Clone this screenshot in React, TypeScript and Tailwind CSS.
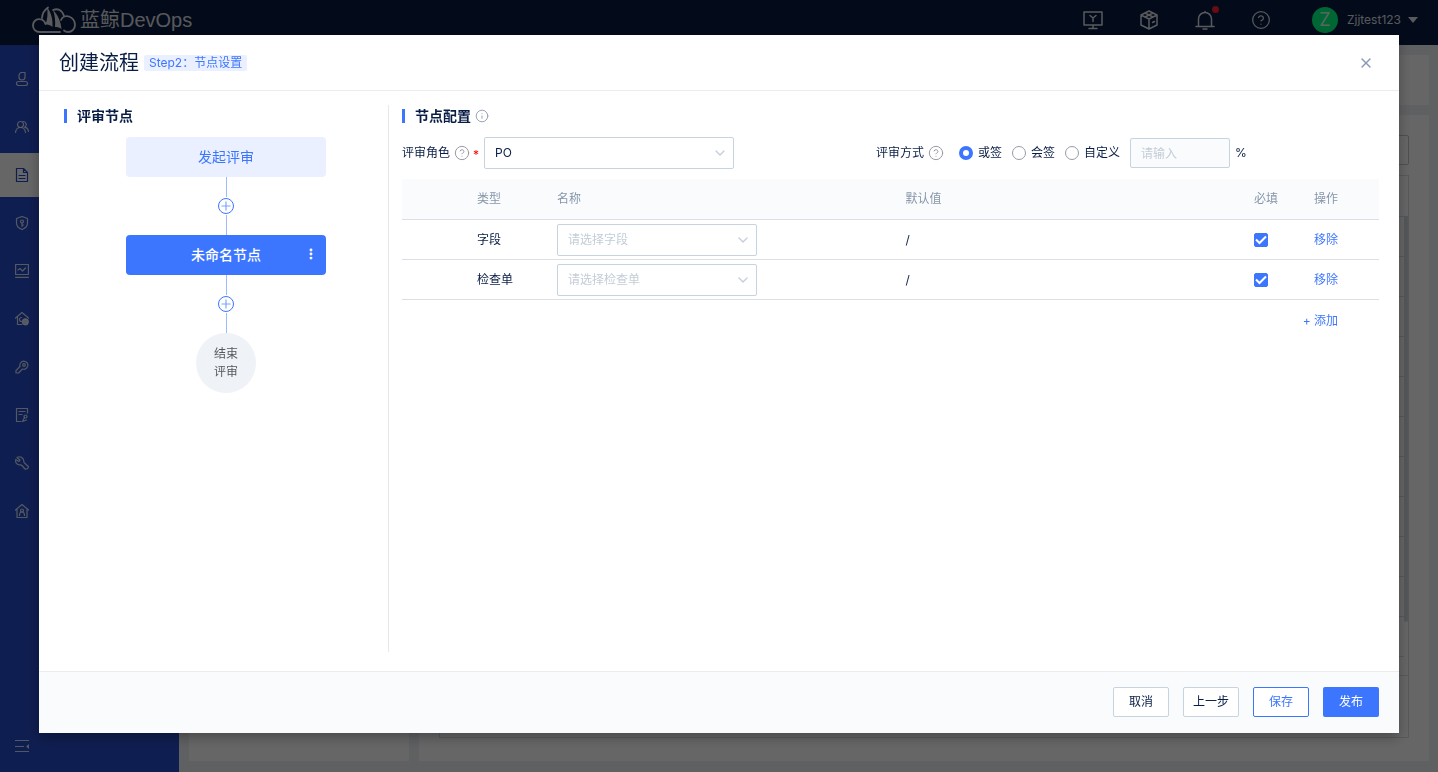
import type { ReactNode } from "react";
import { ChevronDown, CircleHelp, EllipsisVertical, Info, Plus, X } from "lucide-react";

const stroke = {
  fill: "none",
  stroke: "currentColor",
  strokeWidth: 1.2,
  strokeLinecap: "round",
  strokeLinejoin: "round",
} as const;

const menu: { label: string; icon: ReactNode }[] = [
  {
    label: "概览",
    icon: (
      <>
        <path d="M10 .5H7A3 3 0 0 0 4 3.500V5a3 3 0 0 0 6 0z" />
        <rect x="1.5" y="9.500" width="11" height="4" rx="2" />
      </>
    ),
  },
  {
    label: "团队",
    icon: (
      <>
        <circle cx="5.5" cy="4.5" r="3" />
        <path d="M.5 12.5c.3-3 2-5 5-5s4.700 2 5 5M8 1.500a3 3 0 0 1 1.500 5.700c2.300.3 3.700 2 4 4.300" />
      </>
    ),
  },
  {
    label: "需求",
    icon: <path d="M1.500 .5h7l4 4v9h-11zM8.500 .5v4h4M4 7.500h6M4 10.500h6" />,
  },
  {
    label: "安全",
    icon: (
      <>
        <path d="M7 .5l5.500 2v4.500c0 3-2 5.200-5.500 6.500C3.500 12.200 1.500 10 1.500 7V2.500z" />
        <circle cx="7" cy="5.5" r="1.500" />
        <path d="M7 7v3.500M7 9h1.500" />
      </>
    ),
  },
  {
    label: "度量",
    icon: <path d="M.6 .5h12.800v10H.6zM3 6l2-1.500 2.500 2.500L10.500 4M.6 13.400h12.800" />,
  },
  {
    label: "仓库",
    icon: (
      <>
        <path d="M.5 6L7 .5 13.500 6M2.500 5v7.500H7M6.500 5.500A2 2 0 0 0 6.500 9.500" />
        <circle cx="10.3" cy="9.800" r="3" fill="currentColor" />
      </>
    ),
  },
  {
    label: "工具",
    icon: (
      <>
        <path d="M5.500 3a4 4 0 1 1 2 6L3.500 13H1v-2.500l4-4A4 4 0 0 1 5.500 3z" />
        <circle cx="9" cy="5" r="1.300" />
      </>
    ),
  },
  {
    label: "评审",
    icon: (
      <>
        <path d="M12.500 5V.5h-11v13H6M4 3.500h6M4 6.500h3" />
        <circle cx="10.5" cy="8.500" r="1.500" />
        <path d="M9.500 9.500L7.500 13.500l4-1.500" />
      </>
    ),
  },
  {
    label: "运维",
    icon: (
      <path d="M2 1.500L5 4 4 5.500 .8 3.500C0 6.500 2 9 5 8.800c1 0 1.500.2 2 .7l2.500 3c1.500 1.500 4.300 0 3.800-2L9.500 7c-.6-.6-.7-1.200-.7-2C8.600 2 5 -.5 2 1.500z" />
    ),
  },
  {
    label: "项目",
    icon: (
      <>
        <path d="M.5 6L7 .5 13.500 6M2 5v8.500h10V5" />
        <circle cx="7" cy="6.500" r="1.500" />
        <path d="M4.500 11.500c0-2 1-3.500 2.500-3.500s2.500 1.500 2.500 3.500" />
      </>
    ),
  },
];

const tableRows = [
  { type: "字段", placeholder: "请选择字段" },
  { type: "检查单", placeholder: "请选择检查单" },
];

function Logo() {
  return (
    <svg width="44" height="28" viewBox="0 0 44 28" fill="none" stroke="currentColor" strokeWidth="1.8" strokeLinecap="round">
      <path d="M28 26H8C3.500 26 1 23 1 19.500 1 15 5 12 9.500 13.500c2 .7 3.500 2.500 4 4.500" />
      <path d="M10 12c.3-4.500 2.500-8 6-10.500M21 4c5-2 9 0 11 6M29 14c1.500-3.500 5-4.500 8-3.500 4 1.500 6 5 6 8.500 0 4-3 7-7 7-2 0-3-.5-4-1.500" />
      <path d="M15 1c4.500 6 6 13 5.500 20-2-2-5-2.500-7-2.500C15.500 13 16 7 15 1z" fill="currentColor" stroke="none" />
      <path d="M21 4c5 5 8 12 8.500 19-2-1.500-4-2-6.500-2 .5-6 0-11-2-17z" fill="currentColor" stroke="none" />
    </svg>
  );
}

function TopBar() {
  return (
    <header className="flex h-[45px] items-center justify-between bg-[#081a42] pr-5 pb-[5px] pl-8 text-[#ffffffdd]">
      <a href="#" className="flex items-center gap-1">
        <Logo />
        <span className="font-['Liberation_Sans','Noto_Sans_CJK_SC',sans-serif] text-xl">蓝鲸DevOps</span>
      </a>
      <div className="flex items-center">
        <div className="flex items-center gap-9">
          <button type="button" aria-label="控制台">
            <svg width="20" height="20" viewBox="0 0 20 20" {...stroke} strokeWidth={1.5}>
              <path d="M1 2h18v13H1zM10 15v3M6 18.500h8M7 5.500l3 2.500 3-2.500M10 8v3.500" />
            </svg>
          </button>
          <button type="button" aria-label="服务">
            <svg width="20" height="20" viewBox="0 0 20 20" {...stroke} strokeWidth={1.5}>
              <path d="M10 1l8 4v10l-8 4-8-4V5zM2 5l8 4 8-4M10 9v10M6 3l8 4M14 3L6 7M13.500 12.500l2-1" />
            </svg>
          </button>
          <button type="button" aria-label="通知" className="relative">
            <svg width="20" height="20" viewBox="0 0 20 20" {...stroke} strokeWidth={1.5}>
              <path d="M1 16.500h18M3.500 16.500V9a6.500 6.500 0 0 1 13 0v7.500M8 19h4M10 2.500V1.500" />
            </svg>
            <span className="absolute -top-1 -right-1 size-[7px] rounded-full bg-[#ff1f2d]" />
          </button>
          <button type="button" aria-label="帮助">
            <CircleHelp size={20} strokeWidth={1.5} />
          </button>
        </div>
        <button type="button" className="ml-[41px] flex items-center">
          <span className="flex size-[26px] items-center justify-center rounded-full bg-[#00ff80] text-lg leading-none">Z</span>
          <span className="ml-[9px] text-xs">Zjjtest123</span>
          <svg width="10" height="6" viewBox="0 0 10 6" className="ml-[7px]" fill="currentColor">
            <path d="M0 0h10L5 6z" />
          </svg>
        </button>
      </div>
    </header>
  );
}

function Sidebar() {
  return (
    <aside className="flex w-[179px] flex-col justify-between bg-[#264bc8] pt-3 pb-[19px] text-[#ffffffcc]">
      <nav className="flex flex-col gap-1">
        {menu.map((item) => (
          <a
            key={item.label}
            href="#"
            aria-label={item.label}
            className={
              item.label === "需求"
                ? "flex h-11 items-center bg-white pl-[15px] text-[#264bc8]"
                : "flex h-11 items-center pl-[15px]"
            }
          >
            <svg width="14" height="14" viewBox="0 0 14 14" {...stroke}>
              {item.icon}
            </svg>
          </a>
        ))}
      </nav>
      <button type="button" aria-label="收起" className="ml-[15px] w-[14px]">
        <svg width="14" height="14" viewBox="0 0 14 14" {...stroke}>
          <path d="M0 1.500h14M0 7.500h8.500M0 12.500h14" />
          <path d="M14 5v5l-3-2.500z" fill="currentColor" stroke="none" />
        </svg>
      </button>
    </aside>
  );
}

function Background() {
  return (
    <div className="flex min-h-screen flex-col">
      <TopBar />
      <div className="flex grow">
        <Sidebar />
        <main className="flex grow flex-col gap-2.5 bg-[#eef0f4] pt-2.5 pr-[9px] pb-[11px] pl-2.5">
          <div className="h-[50px] bg-white" />
          <div className="flex grow gap-2.5">
            <div className="w-[220px] bg-white" />
            <div className="flex grow flex-col gap-2.5 bg-white px-5 pt-5 pb-[23px]">
              <div className="h-[30px] w-60 self-end rounded-xs border border-[#c4c6cc]" />
              <div className="grow border border-[#dcdee5]">
                <div className="flex border-b border-[#dcdee5]">
                  <div className="grow pt-10">
                    {Array.from({ length: 12 }, (_, i) => (
                      <div key={i} className="h-10 border-t border-[#dcdee5] last:h-[19px]" />
                    ))}
                  </div>
                  <div className="mt-10 h-[406px] w-1 rounded-b-xs bg-[#d4dae0]" />
                </div>
              </div>
            </div>
          </div>
        </main>
      </div>
    </div>
  );
}

function SectionTitle({ children }: { children: ReactNode }) {
  return (
    <h3 className="flex h-[22px] items-center text-sm font-bold">
      <span className="mr-2.5 h-3.5 w-[3px] bg-[#3c76ff]" />
      {children}
    </h3>
  );
}

function Connector() {
  return (
    <div className="flex flex-col items-center">
      <div className="h-5 w-px bg-[#9dbaff]" />
      <button
        type="button"
        aria-label="添加节点"
        className="my-px flex size-4 items-center justify-center rounded-full border border-[#3c76ff] text-[#7ca3ff]"
      >
        <Plus size={14} strokeWidth={2} />
      </button>
      <div className="h-5 w-px bg-[#9dbaff]" />
    </div>
  );
}

function FlowPanel() {
  return (
    <section className="w-[325px] shrink-0 border-r border-[#e6e7ec]">
      <SectionTitle>评审节点</SectionTitle>
      <div className="mt-2.5 flex flex-col items-center">
        <button type="button" className="h-10 w-[200px] rounded-sm bg-[#eaf0ff] text-sm text-[#3c76ff]">
          发起评审
        </button>
        <Connector />
        <div className="relative">
          <button type="button" className="h-10 w-[200px] rounded-sm bg-[#3c76ff] text-sm font-medium text-white">
            未命名节点
          </button>
          <button type="button" aria-label="更多" className="absolute top-3 right-2 text-white">
            <EllipsisVertical size={14} strokeWidth={3} />
          </button>
        </div>
        <Connector />
        <div className="flex size-[60px] items-center justify-center rounded-full bg-[#eff2f7] text-center text-xs leading-[18px] text-[#55585e]">
          结束
          <br />
          评审
        </div>
      </div>
    </section>
  );
}

function SelectBox({ label, id, value, className }: { label: string; id?: string; value: string; className: string }) {
  return (
    <div className={`relative flex items-center ${className}`}>
      <select
        id={id}
        aria-label={label}
        className="h-8 w-full appearance-none rounded-xs border border-[#c8d3e0] bg-white px-2.5 text-xs"
      >
        <option>{value}</option>
      </select>
      <ChevronDown size={16} strokeWidth={2} className="pointer-events-none absolute right-1.5 text-[#c3cddb]" />
    </div>
  );
}

function SignRadio({ label, checked }: { label: string; checked?: boolean }) {
  return (
    <label className="flex items-center gap-[5px]">
      <input
        type="radio"
        name="sign"
        defaultChecked={checked}
        className="size-3.5 appearance-none rounded-full border border-[#979ba5] checked:border-4 checked:border-[#3c76ff]"
      />
      {label}
    </label>
  );
}

function ConfigForm() {
  return (
    <div className="mt-2.5 flex h-8 items-center pr-[29px]">
      <div className="flex flex-1 items-center">
        <label htmlFor="role">评审角色</label>
        <CircleHelp size={16} strokeWidth={1.5} className="ml-1 text-[#979ba5]" />
        <span className="mr-[5px] ml-[3px] pt-1 text-[#ff0000]">*</span>
        <SelectBox id="role" label="评审角色" value="PO" className="w-[250px]" />
      </div>
      <div className="flex flex-1 items-center whitespace-nowrap">
        <span>评审方式</span>
        <CircleHelp size={16} strokeWidth={1.5} className="mr-[15px] ml-1 text-[#979ba5]" />
        <div className="flex items-center gap-2.5">
          <SignRadio label="或签" checked />
          <SignRadio label="会签" />
          <SignRadio label="自定义" />
          <input
            type="text"
            placeholder="请输入"
            aria-label="自定义比例"
            disabled
            className="h-[30px] w-[100px] rounded-xs border border-[#c8d3e0] bg-[#fafbfd] px-2.5 placeholder:text-[#c3cdd7]"
          />
        </div>
        <span className="ml-[5px]">%</span>
      </div>
    </div>
  );
}

function ConfigTable() {
  return (
    <table className="mt-2.5 w-full table-fixed border-separate border-spacing-0 text-left">
      <thead>
        <tr className="bg-[#fafbfd] text-[#8797aa] [&>th]:h-[41px] [&>th]:border-b [&>th]:border-[#dcdee5] [&>th]:px-2.5 [&>th]:font-normal">
          <th className="w-[65px]" />
          <th className="w-20">类型</th>
          <th>名称</th>
          <th>默认值</th>
          <th className="w-[60px]">必填</th>
          <th className="w-[75px]">操作</th>
        </tr>
      </thead>
      <tbody>
        {tableRows.map((row) => (
          <tr key={row.type} className="[&>td]:h-10 [&>td]:border-b [&>td]:border-[#dcdee5] [&>td]:px-2.5">
            <td />
            <td>{row.type}</td>
            <td>
              <SelectBox label={row.type} value={row.placeholder} className="w-[200px] text-[#c3cdd7]" />
            </td>
            <td>/</td>
            <td>
              <span className="relative flex">
                <input
                  type="checkbox"
                  aria-label={`${row.type}必填`}
                  defaultChecked
                  className="size-3.5 appearance-none rounded-xs border border-[#979ba5] checked:border-[#3c76ff] checked:bg-[#3c76ff]"
                />
                <svg viewBox="0 0 14 14" className="pointer-events-none absolute size-3.5" fill="none" stroke="#fff" strokeWidth="2">
                  <path d="M2 6.500l3.500 3.500L12 3.500" />
                </svg>
              </span>
            </td>
            <td>
              <button type="button" className="text-[#3c76ff]">
                移除
              </button>
            </td>
          </tr>
        ))}
      </tbody>
    </table>
  );
}

function CreateDialog() {
  const plainButton = "h-[30px] w-14 rounded-xs border border-[#c8d3e0] bg-white";

  return (
    <div className="fixed inset-0 flex bg-black/60 px-[39px] pt-[35px] pb-[39px]">
      <div
        role="dialog"
        aria-label="创建流程"
        className="flex grow flex-col bg-white text-xs text-[#081d45] shadow-[0_4px_12px_rgba(0,0,0,0.3)]"
      >
        <div className="flex h-14 items-center border-b border-[#ebecf0] px-5">
          <h2 className="text-xl">创建流程</h2>
          <span className="ml-[5px] h-4 rounded-xs bg-[#eaf0ff] px-[5px] leading-4 text-[#3c76ff]">Step2：节点设置</span>
          <button type="button" aria-label="关闭" className="mr-[5px] ml-auto text-[#8797b5]">
            <X size={16} strokeWidth={2} />
          </button>
        </div>
        <div className="flex grow pt-3.5 pr-5 pb-[19px] pl-[25px]">
          <FlowPanel />
          <section className="ml-[13px] grow">
            <SectionTitle>
              节点配置
              <Info size={14} strokeWidth={1.5} className="ml-1 text-[#8c97a8]" />
            </SectionTitle>
            <ConfigForm />
            <ConfigTable />
            <div className="mt-[13px] pr-[41px] text-right">
              <button type="button" className="text-[#3c76ff]">
                + 添加
              </button>
            </div>
          </section>
        </div>
        <footer className="flex h-[62px] items-start justify-end gap-3.5 border-t border-[#ebecf0] bg-[#fafbfd] px-5 pt-[15px]">
          <button type="button" className={plainButton}>
            取消
          </button>
          <button type="button" className={plainButton}>
            上一步
          </button>
          <button type="button" className="h-[30px] w-14 rounded-xs border border-[#3c76ff] bg-white text-[#3c76ff]">
            保存
          </button>
          <button type="button" className="h-[30px] w-14 rounded-xs bg-[#3c76ff] text-white">
            发布
          </button>
        </footer>
      </div>
    </div>
  );
}

export default function App() {
  return (
    <div className="font-['Inter','Noto_Sans_CJK_SC',sans-serif]">
      <Background />
      <CreateDialog />
    </div>
  );
}
